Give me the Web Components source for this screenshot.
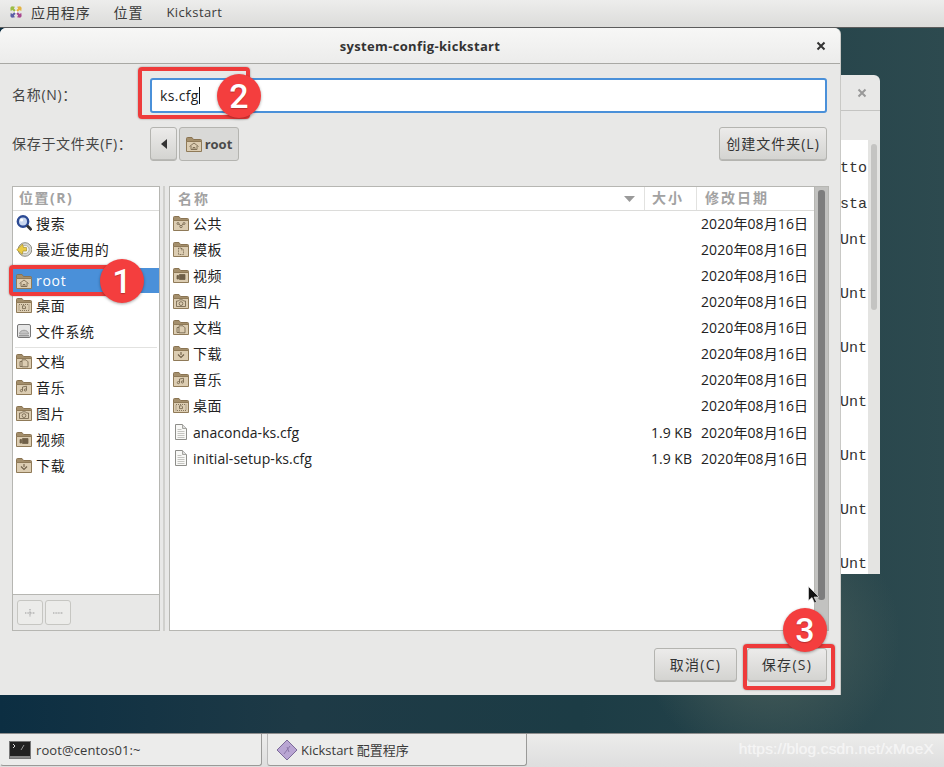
<!DOCTYPE html>
<html><head><meta charset="utf-8">
<style>
html,body{margin:0;padding:0;width:944px;height:767px;overflow:hidden;font-family:"Open Sans","Noto Sans CJK SC",sans-serif;}
</style></head><body>
<x-desktop></x-desktop>
<script>
const FONT='"Open Sans","Noto Sans CJK SC",sans-serif';
const emblems={
 share:'<circle cx="5" cy="8.500" r="1" /><circle cx="11" cy="8.500" r="1"/><circle cx="8" cy="11.500" r="1.200"/><path d="M6 9l1.200 1.500M10 9l-1.200 1.500"/>',
 tmpl:'<path d="M5.500 7h3l2 2v4.500h-5zM8.500 7v2h2" stroke-dasharray="1 .6"/>',
 video:'<path d="M4 8.500h1.500v3.500H4z" fill="#6f5f48"/><path d="M6.500 7.500h5.500v5H6.500z" fill="#6f5f48"/>',
 photo:'<path d="M3.500 8h2l1-1.200h3l1 1.200h2v5.500h-9z"/><circle cx="8" cy="10.600" r="1.900"/>',
 doc:'<path d="M6 6.800h4l2 2v5H6zM6 8.500H4v5h2"/>',
 down:'<path d="M5 9.500l3 3 3-3M8 7v3" stroke-width="1.100"/>',
 music:'<path d="M6.500 11.500V8l4-.8v3.600"/><circle cx="5.400" cy="11.600" r="1.100"/><circle cx="9.400" cy="11" r="1.100"/>',
 desk:'<path d="M3 7.500h10v6H3z" stroke-dasharray="1 1"/><path d="M6.500 8.800h2l1 1v1.800h-3z"/>',
 home:'<path d="M3.500 10.500L8 7l4.500 3.500M5 10v3.500h6V10M7 13.500v-2h2v2"/>'
};
class XIcon extends HTMLElement{
 connectedCallback(){
  const k=this.getAttribute('kind');let s='';
  if(k==='search')s=`<circle cx="7" cy="6.500" r="5.200" fill="#c9d8f0" stroke="#2c4a94" stroke-width="2.400"/><circle cx="5.600" cy="5" r="1.600" fill="#fff"/><path d="M11 10.500l4.500 4.500" stroke="#333" stroke-width="2.800"/>`;
  else if(k==='recent')s=`<circle cx="9" cy="8.500" r="6.800" fill="#d8d8d4" stroke="#8a8a80"/><circle cx="9" cy="8.500" r="4.200" fill="#f2f2ee" stroke="#b0b0a8"/><path d="M.8 8.800L6.500 3l1 3.500h3v3.500H7l-.8 3.500z" fill="#eacb45" stroke="#a08520" stroke-width=".6"/>`;
  else if(k==='fs')s=`<rect x="1.500" y="1.500" width="13" height="13" rx="1.500" fill="#e6e6e6" stroke="#777"/><path d="M3.500 11c0-5 9-5 9 0z" fill="#c4c4c4" stroke="#a0a0a0"/><rect x="3" y="12" width="10" height="1.500" fill="#999"/>`;
  else if(k==='file')s=`<path d="M2.500.5h7l4 4v11h-11z" fill="#f8f8f6" stroke="#8e8e8a"/><path d="M9.500.5v4h4" fill="#ddd" stroke="#a5a5a0"/><path d="M4.500 5.500h4M4.500 7.500h7M4.500 9.500h7M4.500 11.500h7M4.500 13.500h7" stroke="#c4c4c0"/>`;
  else s=`<path d="M.5 14.500V2.500a1 1 0 0 1 1-1h4.500l1.500 2h7a1 1 0 0 1 1 1v10z" fill="#a48f6c" stroke="#8a7452"/><path d="M.5 15.500V5.500h15v10z" fill="#dccdb2" stroke="#8f7a58"/><g fill="none" stroke="#6f5f48" stroke-width=".8">${emblems[k]||''}</g>`;
  this.attachShadow({mode:'open'}).innerHTML=`<style>:host{display:inline-flex;width:16px;height:16px;flex:none}svg{width:16px;height:16px;display:block}</style><svg viewBox="0 0 16 16">${s}</svg>`;
 }
}
customElements.define('x-icon',XIcon);

class XBtn extends HTMLElement{
 constructor(){super();this.attachShadow({mode:'open'}).innerHTML=`<style>
 :host{display:inline-flex;align-items:center;justify-content:center;box-sizing:border-box;height:34px;padding-bottom:3px;border:1px solid #b4b4b0;border-radius:3px;background:linear-gradient(#ecebea,#d3d3d0);color:#333;font:14px ${FONT};letter-spacing:1.300px;box-shadow:inset 0 -1px #b9b9b6;gap:3px;white-space:nowrap}
 :host([flat]){background:#d9d9d7;box-shadow:none;font-weight:700;color:#4a4a4a;letter-spacing:0;font-size:13px;padding-bottom:0}
 </style><slot></slot>`}
}
customElements.define('x-btn',XBtn);

class XCallout extends HTMLElement{
 connectedCallback(){
  const n=this.getAttribute('n');
  this.attachShadow({mode:'open'}).innerHTML=`<style>:host{position:absolute;width:44px;height:44px;border-radius:50%;background:#f43e3e;color:#fff;font:500 34px/44px Roboto,"Liberation Sans",sans-serif;text-align:center;box-shadow:0 1px 3px rgba(0,0,0,.35);text-shadow:0 1px 1px rgba(0,0,0,.25)}</style>${n}`;
 }
}
customElements.define('x-callout',XCallout);

class XBox extends HTMLElement{
 constructor(){super();this.attachShadow({mode:'open'}).innerHTML=`<style>:host{position:absolute;box-sizing:border-box;border:4px solid #ee3b3b;border-radius:4px;box-shadow:0 0 2px rgba(0,0,0,.4)}</style>`}
}
customElements.define('x-box',XBox);

class XRow extends HTMLElement{
 constructor(){super();this.attachShadow({mode:'open'}).innerHTML=`<style>
 :host{display:flex;align-items:center;box-sizing:border-box;height:26px;padding-bottom:2px;color:#222;font:14px ${FONT};letter-spacing:.7px;white-space:nowrap}
 :host([sel]){background:#4a90d9;color:#fff;height:25px;padding-bottom:0}
 .i{display:flex;width:20px;flex:none}
 .n{flex:1;min-width:0}
 </style><span class="i"><slot name="icon"></slot></span><span class="n"><slot></slot></span><slot name="tail"></slot>`}
}
customElements.define('x-row',XRow);

class XPlaces extends HTMLElement{
 constructor(){super();const place=(k,t,a='')=>`<x-row ${a} style="padding-left:3px"><x-icon slot="icon" kind="${k}"></x-icon>${t}</x-row>`;
 this.attachShadow({mode:'open'}).innerHTML=`<style>
 :host{display:flex;flex-direction:column;box-sizing:border-box;width:148px;border:1px solid #b6b6b2;background:#fff;flex:none}
 .h{height:24px;box-sizing:border-box;border-bottom:1px solid #dcdcda;padding:0 6px;font:700 14px/22px ${FONT};letter-spacing:1.500px;color:#a2a2a2}
 .l{flex:1;padding-top:0}
 .sep{height:1px;background:#e2e2e0;margin:2px 2px 1px}
 .f{height:36px;box-sizing:border-box;border-top:1px solid #b6b6b2;background:#e8e8e7;display:flex;gap:2px;padding:5px 4px}
 .b{width:26px;height:25px;box-sizing:border-box;border:1px solid #c6c6c2;border-radius:3px;background:#ececea;display:flex;align-items:center;justify-content:center}
 svg{width:10px;height:10px}
 </style>
 <div class="h">位置(R)</div>
 <div class="l">
 ${place('search','搜索')}${place('recent','最近使用的')}
 <div style="height:5px"></div>
 ${place('home','root','sel')}${place('desk','桌面')}${place('fs','文件系统')}
 <div class="sep"></div>
 ${place('doc','文档')}${place('music','音乐')}${place('photo','图片')}${place('video','视频')}${place('down','下载')}
 </div>
 <div class="f"><div class="b"><svg viewBox="0 0 10 10"><path d="M0 5h10M5 1v8" stroke="#999" stroke-dasharray="1 .6"/></svg></div><div class="b"><svg viewBox="0 0 10 10"><path d="M0 5h10" stroke="#999" stroke-dasharray="1 .6"/></svg></div></div>`}
}
customElements.define('x-places',XPlaces);

class XFiles extends HTMLElement{
 constructor(){super();
 const d='2020年08月16日';
 const rows=[['share','公共'],['tmpl','模板'],['video','视频'],['photo','图片'],['doc','文档'],['down','下载'],['music','音乐'],['desk','桌面'],['file','anaconda-ks.cfg','1.9 KB'],['file','initial-setup-ks.cfg','1.9 KB']];
 this.attachShadow({mode:'open'}).innerHTML=`<style>
 :host{display:flex;box-sizing:border-box;width:660px;border:1px solid #b6b6b2;background:#fff;flex:none}
 .m{flex:1;min-width:0;display:flex;flex-direction:column}
 .h{display:flex;height:24px;box-sizing:border-box;border-bottom:1px solid #dcdcda;font:700 14px/21px ${FONT};letter-spacing:2px;color:#a2a2a2}
 .h div{box-sizing:border-box}
 .c1{width:475px;padding-left:8px;border-right:1px solid #e2e2e0;display:flex;justify-content:space-between;align-items:center}
 .c2{width:52px;padding-left:7px;border-right:1px solid #e2e2e0}
 .c3{flex:1;padding-left:8px}
 .l{padding-top:0;flex:1}
 x-row{padding-left:3px}
 .first{margin-top:1px}
 .s{width:44px;text-align:right;margin-right:9px;letter-spacing:0;font-size:14px}
 .d{width:113px;letter-spacing:.1px}
 .sb{width:14px;box-sizing:border-box;background:#c2c2c0;border-left:1px solid #b6b6b2;padding:3px 3px;flex:none;margin-top:0}
 .t{height:410px;background:#7e7e7e;border-radius:3px}
 </style>
 <div class="m"><div class="h"><div class="c1"><span>名称</span><svg width="11" height="6" style="margin-right:9px"><path d="M0 0h11L5.500 6z" fill="#9a9a9a"/></svg></div><div class="c2">大小</div><div class="c3">修改日期</div></div>
 <div class="l">${rows.map((r,i)=>`<x-row${i===8?' class="first"':''}><x-icon slot="icon" kind="${r[0]}"></x-icon><span style="letter-spacing:${r[2]?'.05px':'.4px'}">${r[1]}</span><span slot="tail" class="s">${r[2]||''}</span><span slot="tail" class="d">${d}</span></x-row>`).join('')}</div></div>
 <div class="sb"><div class="t"></div></div>`}
}
customElements.define('x-files',XFiles);

class XDialog extends HTMLElement{
 constructor(){super();this.attachShadow({mode:'open'}).innerHTML=`<style>
 :host{position:absolute;left:0;top:0;width:840px;height:667px;display:flex;flex-direction:column;background:#e8e8e7;border-radius:6px 6px 0 0;box-shadow:1px 0 0 #c9c9c6;overflow:hidden;color:#333}
 .tb{height:36px;flex:none;box-sizing:border-box;border-bottom:1px solid #a8a8a4;background:linear-gradient(#f7f7f6,#ececeb);display:flex;align-items:center;justify-content:center;position:relative;font:700 13px "Open Sans","Noto Sans CJK SC",sans-serif;letter-spacing:.35px;color:#333}
 .x{position:absolute;right:14px;top:13px;width:10px;height:10px}
 .body{flex:1;display:flex;flex-direction:column;padding:14px 13px 13px 12px;min-height:0}
 .r{display:flex;align-items:center}
 .lab{width:138px;flex:none;font:14px ${FONT};letter-spacing:.7px;color:#444;padding-bottom:3px}
 .entry{flex:1;height:35px;box-sizing:border-box;border:2px solid #4a90d9;border-radius:3px;background:#fff;font:14px/31px ${FONT};letter-spacing:.35px;padding-left:8px;color:#222;display:flex;align-items:center}
 .caret{width:1px;height:17px;background:#111}
 .path{margin-top:14px;height:34px}
 .pane{flex:1;display:flex;margin-top:25px;min-height:0;margin-bottom:17px;gap:0}
 .div{width:9px;flex:none;position:relative}
 .div::after{content:"";position:absolute;left:3px;top:0;bottom:0;width:2px;background:#d0d0cd}
 .act{display:flex;justify-content:flex-end;gap:10px;height:34px}
 .arrow{width:0;height:0;border:5px solid transparent;border-right:6px solid #333;border-left:0}
 </style>
 <div class="tb">system-config-kickstart<svg class="x" viewBox="0 0 10 10"><path d="M1.500 1.500l7 7M8.500 1.500l-7 7" stroke="#333" stroke-width="2"/></svg></div>
 <div class="body">
  <div class="r"><div class="lab">名称(N)：</div><div class="entry">ks.cfg<span class="caret"></span></div></div>
  <div class="r path"><div class="lab">保存于文件夹(F)：</div><x-btn style="width:27px;padding-bottom:0"><span class="arrow"></span></x-btn><x-btn flat style="width:60px;margin-left:2px"><x-icon kind="home"></x-icon>root</x-btn><span style="flex:1"></span><x-btn style="width:108px;letter-spacing:1px">创建文件夹(L)</x-btn></div>
  <div class="pane"><x-places></x-places><div class="div"></div><x-files></x-files></div>
  <div class="act"><x-btn style="width:83px">取消(C)</x-btn><x-btn style="width:80px">保存(S)</x-btn></div>
 </div>`}
}
customElements.define('x-dialog',XDialog);

class XBackWin extends HTMLElement{
 constructor(){super();this.attachShadow({mode:'open'}).innerHTML=`<style>
 :host{position:absolute;left:700px;top:47px;width:180px;height:499px;background:#e8e8e7;border-radius:0 6px 0 0;display:flex;flex-direction:column;overflow:hidden}
 .t{height:36px;flex:none;box-sizing:border-box;border-bottom:1px solid #c4c4c2;position:relative}
 .x{position:absolute;right:13px;top:13px;width:10px;height:10px}
 .g{height:29px;flex:none}
 .m{flex:1;display:flex;min-height:0;justify-content:flex-end}
 .c{width:28px;background:#fff;font:15px "Liberation Mono","DejaVu Sans Mono",monospace;color:#333;overflow:hidden;white-space:nowrap;padding-left:0;letter-spacing:0}
 .c div{height:36px;line-height:36px}
 .c .u{height:54px}
 .s{width:12px;flex:none;background:#e4e4e2;padding:4px 3px 0;box-sizing:border-box}
 .s div{height:166px;background:#c4c4c2;border-radius:3px}
 </style>
 <div class="t"><svg class="x" viewBox="0 0 10 10"><path d="M1.500 1.500l7 7M8.500 1.500l-7 7" stroke="#999" stroke-width="2"/></svg></div>
 <div class="g"></div>
 <div class="m"><div class="c">
 <div style="margin-top:11px">tto</div><div>sta</div><div class="u">Unt</div><div class="u">Unt</div><div class="u">Unt</div><div class="u">Unt</div><div class="u">Unt</div><div class="u">Unt</div><div class="u">Unt</div></div><div class="s"><div></div></div></div>`}
}
customElements.define('x-backwin',XBackWin);

class XTopbar extends HTMLElement{
 constructor(){super();this.attachShadow({mode:'open'}).innerHTML=`<style>
 :host{display:flex;align-items:center;box-sizing:border-box;height:28px;padding:0 0 3px 9px;background:linear-gradient(#ededec,#dcdcda);border-bottom:1px solid #5c5c5c;font:14px ${FONT};color:#3b3b3b;flex:none}
 svg{width:14px;height:14px;margin-right:8px;flex:none}
 span{margin-right:23px;letter-spacing:.9px}
 .k{font-size:13px;letter-spacing:.4px}
 </style>
 <svg viewBox="0 0 14 14"><g transform="rotate(45 7 7)"><path d="M5.500 5.500h3v3h-3z" fill="#fff"/><path d="M6 0h2l2 2.500-2 .5v2.500H6V3L4 2.500z" fill="#e3b341"/><path d="M14 6v2l-2.500 2-.5-2H8.500V6H11l.5-2z" fill="#a8478f"/><path d="M8 14H6l-2-2.500 2-.5V8.500h2V11l2 .5z" fill="#5b5ea6"/><path d="M0 8V6l2.500-2 .5 2h2.500v2H3l-.5 2z" fill="#9cbd45"/></g></svg>
 <span>应用程序</span><span>位置</span><span class="k">Kickstart</span>`}
}
customElements.define('x-topbar',XTopbar);

class XTaskItem extends HTMLElement{
 constructor(){super();this.attachShadow({mode:'open'}).innerHTML=`<style>
 :host{display:flex;align-items:center;box-sizing:border-box;height:32px;border:1px solid #9a9a98;border-top:0;border-left-color:transparent;border-radius:0 0 3px 3px;background:#ececeb;font:13px ${FONT};color:#3a3a3a;gap:5px;white-space:nowrap;flex:none}
 </style><slot></slot>`}
}
customElements.define('x-taskitem',XTaskItem);

class XTaskbar extends HTMLElement{
 constructor(){super();this.attachShadow({mode:'open'}).innerHTML=`<style>
 :host{display:flex;box-sizing:border-box;height:34px;flex:none;border-top:1px solid #8e8e8e;background:linear-gradient(#ececeb,#dedede);gap:5px;position:relative}
 .w{position:absolute;right:10px;top:6px;font:15.500px "Liberation Sans",sans-serif;letter-spacing:.15px;color:#fff;opacity:.6;text-shadow:0 0 1px rgba(255,255,255,.8)}
 svg{flex:none}
 </style>
 <x-taskitem style="width:262px;padding-left:8px"><svg width="22" height="18" viewBox="0 0 22 18"><rect x=".5" y=".5" width="21" height="17" fill="#222" stroke="#777"/><rect x="1" y="15" width="20" height="2" fill="#888"/><path d="M4 3l2 2-2 2" stroke="#ddd" fill="none"/><path d="M12 9l3-5" stroke="#999"/></svg><span style="letter-spacing:.1px">root@centos01:~</span></x-taskitem>
 <x-taskitem style="width:260px;padding-left:8px;gap:3px;border-left-color:#bbb"><svg width="22" height="22" viewBox="0 0 22 22"><path d="M11 1l10 10-10 10L1 11z" fill="#b9a5d3" stroke="#7c6a99"/><path d="M8 15l6-8M11 8l2 5" stroke="#8a76a8" fill="none"/></svg>Kickstart 配置程序</x-taskitem>
 <span class="w">https://blog.csdn.net/xMoeX</span>`}
}
customElements.define('x-taskbar',XTaskbar);

class XDesktop extends HTMLElement{
 constructor(){super();this.attachShadow({mode:'open'}).innerHTML=`<style>
 :host{display:flex;flex-direction:column;width:944px;height:767px;position:relative;overflow:hidden}
 .area{flex:1;position:relative;min-height:0;background:radial-gradient(circle 130px at 770px 610px,#4b5f5b,rgba(75,95,91,0)),linear-gradient(90deg,#0c2e42 0,#1e3a46 300px,#1c3c45 580px,#2d4a4f 944px)}
 .cursor{position:absolute;left:808px;top:558px;width:12px;height:18px}
 </style>
 <x-topbar></x-topbar>
 <div class="area"><x-backwin></x-backwin><x-dialog></x-dialog>
 <svg class="cursor" viewBox="0 0 12 18"><path d="M.5.5v14l3.500-3 2.500 5.500 2-1-2.500-5H11z" fill="#111" stroke="#eee" stroke-width=".6"/></svg>
 </div>
 <x-taskbar></x-taskbar>
 <x-box style="left:9px;top:265px;width:112px;height:31px"></x-box>
 <x-box style="left:138px;top:67px;width:112px;height:52px"></x-box>
 <x-box style="left:743px;top:644px;width:92px;height:46px"></x-box>
 <x-callout n="1" style="left:100px;top:259px"></x-callout>
 <x-callout n="2" style="left:217px;top:74px"></x-callout>
 <x-callout n="3" style="left:783px;top:608px"></x-callout>`}
}
customElements.define('x-desktop',XDesktop);
</script>
</body></html>
